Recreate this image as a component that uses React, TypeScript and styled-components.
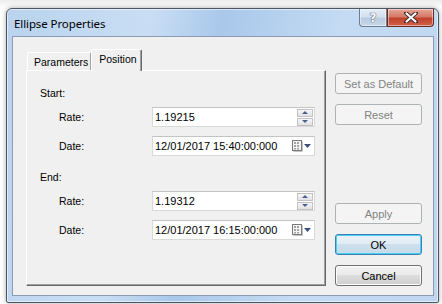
import styled, { createGlobalStyle } from "styled-components";

const GlobalStyle = createGlobalStyle`
	html, body {
		margin: 0;
		padding: 0;
		background: #ffffff;
	}
	body {
		font-family: "Liberation Sans", Arial, sans-serif;
		font-size: 10.5px;
		color: #000;
	}
`;

const Page = styled.div`
	width: 442px;
	height: 304px;
	padding: 8px 0 0 6px;
	box-sizing: border-box;
	background: linear-gradient(#ececec, #ffffff 8px);
`;

const Window = styled.div`
	width: 433px;
	height: 295px;
	box-sizing: border-box;
	border: 1px solid #4b5563;
	border-radius: 6px 6px 2px 2px;
	background: linear-gradient(100deg, #b9d3ee 0%, #c9def4 30%, #a9c8ea 45%, #c4dbf3 70%, #bed6f0 100%);
	box-shadow: 0 0 5px rgba(0, 0, 0, 0.35), inset 0 0 0 1px rgba(255, 255, 255, 0.55);
	display: flex;
	flex-direction: column;
`;

const TitleBar = styled.div`
	height: 27px;
	display: flex;
	align-items: flex-start;
	padding-left: 7px;
`;

const Title = styled.div`
	font-family: "Noto Sans", "Liberation Sans", sans-serif;
	font-size: 11.5px;
	line-height: 15px;
	margin-top: 7px;
	flex: 1;
	color: #000;
	letter-spacing: -0.1px;
`;

const CaptionButtons = styled.div`
	display: flex;
	margin-right: 4px;
`;

const CaptionButton = styled.div<{ $close?: boolean }>`
	height: 18px;
	width: ${p => (p.$close ? "47px" : "28px")};
	box-sizing: border-box;
	border: 1px solid ${p => (p.$close ? "#6b2b22" : "#6d7d92")};
	border-top: none;
	border-radius: ${p => (p.$close ? "0 0 4px 0" : "0 0 0 4px")};
	background: ${p =>
		p.$close
			? "linear-gradient(#e6a595 0%, #d47a68 45%, #c0412c 55%, #d0624c 100%)"
			: "linear-gradient(#e4edf7 0%, #d3e0ef 45%, #b9cbe0 55%, #c9d8ea 100%)"};
	box-shadow: inset 0 0 0 1px rgba(255, 255, 255, 0.45);
	display: flex;
	align-items: center;
	justify-content: center;
	color: #fff;
	font-family: "DejaVu Sans", sans-serif;
	font-weight: bold;
	font-size: 12px;
	text-shadow: 0 0 1px #2a3a50, 0 0 1px #2a3a50;
`;

const Client = styled.div`
	flex: 1;
	margin: 0 4px 6px 5px;
	border: 1px solid #8a9db3;
	background: #f0f0f0;
	display: flex;
	padding: 12px 11px 9px 13px;
	gap: 9px;
`;

const TabArea = styled.div`
	width: 300px;
	display: flex;
	flex-direction: column;
`;

const TabStrip = styled.div`
	display: flex;
	align-items: flex-end;
	height: 21px;
	padding-left: 1px;
	position: relative;
	z-index: 1;
`;

const Tab = styled.div<{ $active?: boolean }>`
	box-sizing: border-box;
	height: ${p => (p.$active ? "22px" : "18px")};
	margin-bottom: ${p => (p.$active ? "-1px" : "0")};
	padding: ${p => (p.$active ? "3px 4px 0 7px" : "3px 2px 0 6px")};
	border-top: 1px solid #ffffff;
	border-left: 1px solid #ffffff;
	border-right: 1px solid ${p => (p.$active ? "#696969" : "#a0a0a0")};
	box-shadow: ${p => (p.$active ? "inset -1px 0 0 #a0a0a0" : "none")};
	border-radius: 2px 2px 0 0;
	background: #f0f0f0;
	line-height: 13px;
	white-space: nowrap;
`;

const Panel = styled.div`
	flex: 1;
	box-sizing: border-box;
	border-top: 1px solid #ffffff;
	border-left: 1px solid #ffffff;
	border-right: 1px solid #696969;
	border-bottom: 1px solid #696969;
	box-shadow: inset -1px -1px 0 #a0a0a0;
	padding: 16px 0 0 13px;
	display: flex;
	flex-direction: column;
`;

const Section = styled.div`
	display: flex;
	flex-direction: column;
	gap: 9px;
	& + & {
		margin-top: 15px;
	}
`;

const SectionTitle = styled.div`
	line-height: 13px;
	margin-bottom: -2px;
`;

const Row = styled.div`
	display: flex;
	align-items: center;
	padding-left: 19px;
`;

const Label = styled.div`
	width: 93px;
`;

const Field = styled.div`
	width: 163px;
	height: 20px;
	box-sizing: border-box;
	border: 1px solid #d9d9d9;
	border-top-color: #c4c4c4;
	background: #fff;
	display: flex;
	align-items: center;
	padding: 0 1px 0 2px;
`;

const Value = styled.div`
	flex: 1;
	font-size: 11px;
`;

const Spinner = styled.div`
	width: 16px;
	display: flex;
	flex-direction: column;
	gap: 1px;
`;

const SpinButton = styled.div`
	height: 8px;
	box-sizing: border-box;
	border: 1px solid #c2c2c2;
	background: linear-gradient(#f6f6f6, #e2e2e2);
	display: flex;
	align-items: center;
	justify-content: center;
`;

const Caret = styled.div<{ $up?: boolean }>`
	width: 0;
	height: 0;
	border-left: 3px solid transparent;
	border-right: 3px solid transparent;
	${p => (p.$up ? "border-bottom: 3px solid #4a5f8f;" : "border-top: 3px solid #4a5f8f;")}
`;

const Picker = styled.div`
	display: flex;
	align-items: center;
	gap: 1px;
	margin-right: 2px;
`;

const ButtonColumn = styled.div`
	width: 87px;
	display: flex;
	flex-direction: column;
	justify-content: space-between;
	padding-top: 24px;
`;

const ButtonGroup = styled.div`
	display: flex;
	flex-direction: column;
	gap: 10px;
`;

const Button = styled.div<{ $kind?: "disabled" | "default" | "normal" }>`
	height: 21px;
	box-sizing: border-box;
	border-radius: 3px;
	display: flex;
	align-items: center;
	justify-content: center;
	border: 1px solid
		${p => (p.$kind === "disabled" ? "#adb2b5" : p.$kind === "default" ? "#3c7fb1" : "#707070")};
	background: ${p =>
		p.$kind === "disabled"
			? "#f4f4f4"
			: p.$kind === "default"
			? "linear-gradient(#eaf2f8 0%, #e1ecf5 45%, #cddfec 50%, #c7dbea 100%)"
			: "linear-gradient(#f2f2f2 0%, #ebebeb 45%, #dddddd 50%, #cfcfcf 100%)"};
	box-shadow: ${p =>
		p.$kind === "default" ? "inset 0 0 0 1px #48d0f8" : p.$kind === "normal" ? "inset 0 0 0 1px #fcfcfc" : "none"};
	color: ${p => (p.$kind === "disabled" ? "#838383" : "#000")};
	font-size: 11px;
`;

function Stepper() {
	return (
		<Spinner>
			<SpinButton>
				<Caret $up />
			</SpinButton>
			<SpinButton>
				<Caret />
			</SpinButton>
		</Spinner>
	);
}

function CalendarButton() {
	return (
		<Picker>
			<svg width="11" height="12" viewBox="0 0 11 12">
				<rect x="1.5" y="1.5" width="9" height="10" fill="#8a8a8a" />
				<rect x="0.5" y="0.5" width="9" height="10" fill="#f4f4f4" stroke="#7a7a7a" />
				<g fill="#a4a4a4">
					<rect x="2" y="2" width="2" height="2" />
					<rect x="5" y="2" width="2" height="2" />
					<rect x="2" y="5" width="2" height="2" />
					<rect x="5" y="5" width="2" height="2" />
					<rect x="2" y="8" width="2" height="1.5" />
					<rect x="5" y="8" width="2" height="1.5" />
				</g>
			</svg>
			<svg width="7" height="4" viewBox="0 0 7 4">
				<path d="M0 0 H7 L3.5 4 Z" fill="#3d4f7c" />
			</svg>
		</Picker>
	);
}

function CloseGlyph() {
	return (
		<svg width="14" height="11" viewBox="0 0 14 11">
			<path d="M2 1 L12 10 M12 1 L2 10" stroke="#3b2a2a" strokeWidth="4" strokeLinecap="round" />
			<path d="M2.5 1.5 L11.5 9.5 M11.5 1.5 L2.5 9.5" stroke="#ffffff" strokeWidth="2.2" strokeLinecap="round" />
		</svg>
	);
}

const sections = [
	{ title: "Start:", rate: "1.19215", date: "12/01/2017 15:40:00:000" },
	{ title: "End:", rate: "1.19312", date: "12/01/2017 16:15:00:000" },
];

function App() {
	return (
		<Page>
			<GlobalStyle />
			<Window>
				<TitleBar>
					<Title>Ellipse Properties</Title>
					<CaptionButtons>
						<CaptionButton>?</CaptionButton>
						<CaptionButton $close>
							<CloseGlyph />
						</CaptionButton>
					</CaptionButtons>
				</TitleBar>
				<Client>
					<TabArea>
						<TabStrip>
							<Tab>Parameters</Tab>
							<Tab $active>Position</Tab>
						</TabStrip>
						<Panel>
							{sections.map(s => (
								<Section key={s.title}>
									<SectionTitle>{s.title}</SectionTitle>
									<Row>
										<Label>Rate:</Label>
										<Field>
											<Value>{s.rate}</Value>
											<Stepper />
										</Field>
									</Row>
									<Row>
										<Label>Date:</Label>
										<Field>
											<Value>{s.date}</Value>
											<CalendarButton />
										</Field>
									</Row>
								</Section>
							))}
						</Panel>
					</TabArea>
					<ButtonColumn>
						<ButtonGroup>
							<Button $kind="disabled">Set as Default</Button>
							<Button $kind="disabled">Reset</Button>
						</ButtonGroup>
						<ButtonGroup>
							<Button $kind="disabled">Apply</Button>
							<Button $kind="default">OK</Button>
							<Button $kind="normal">Cancel</Button>
						</ButtonGroup>
					</ButtonColumn>
				</Client>
			</Window>
		</Page>
	);
}

export default App;
